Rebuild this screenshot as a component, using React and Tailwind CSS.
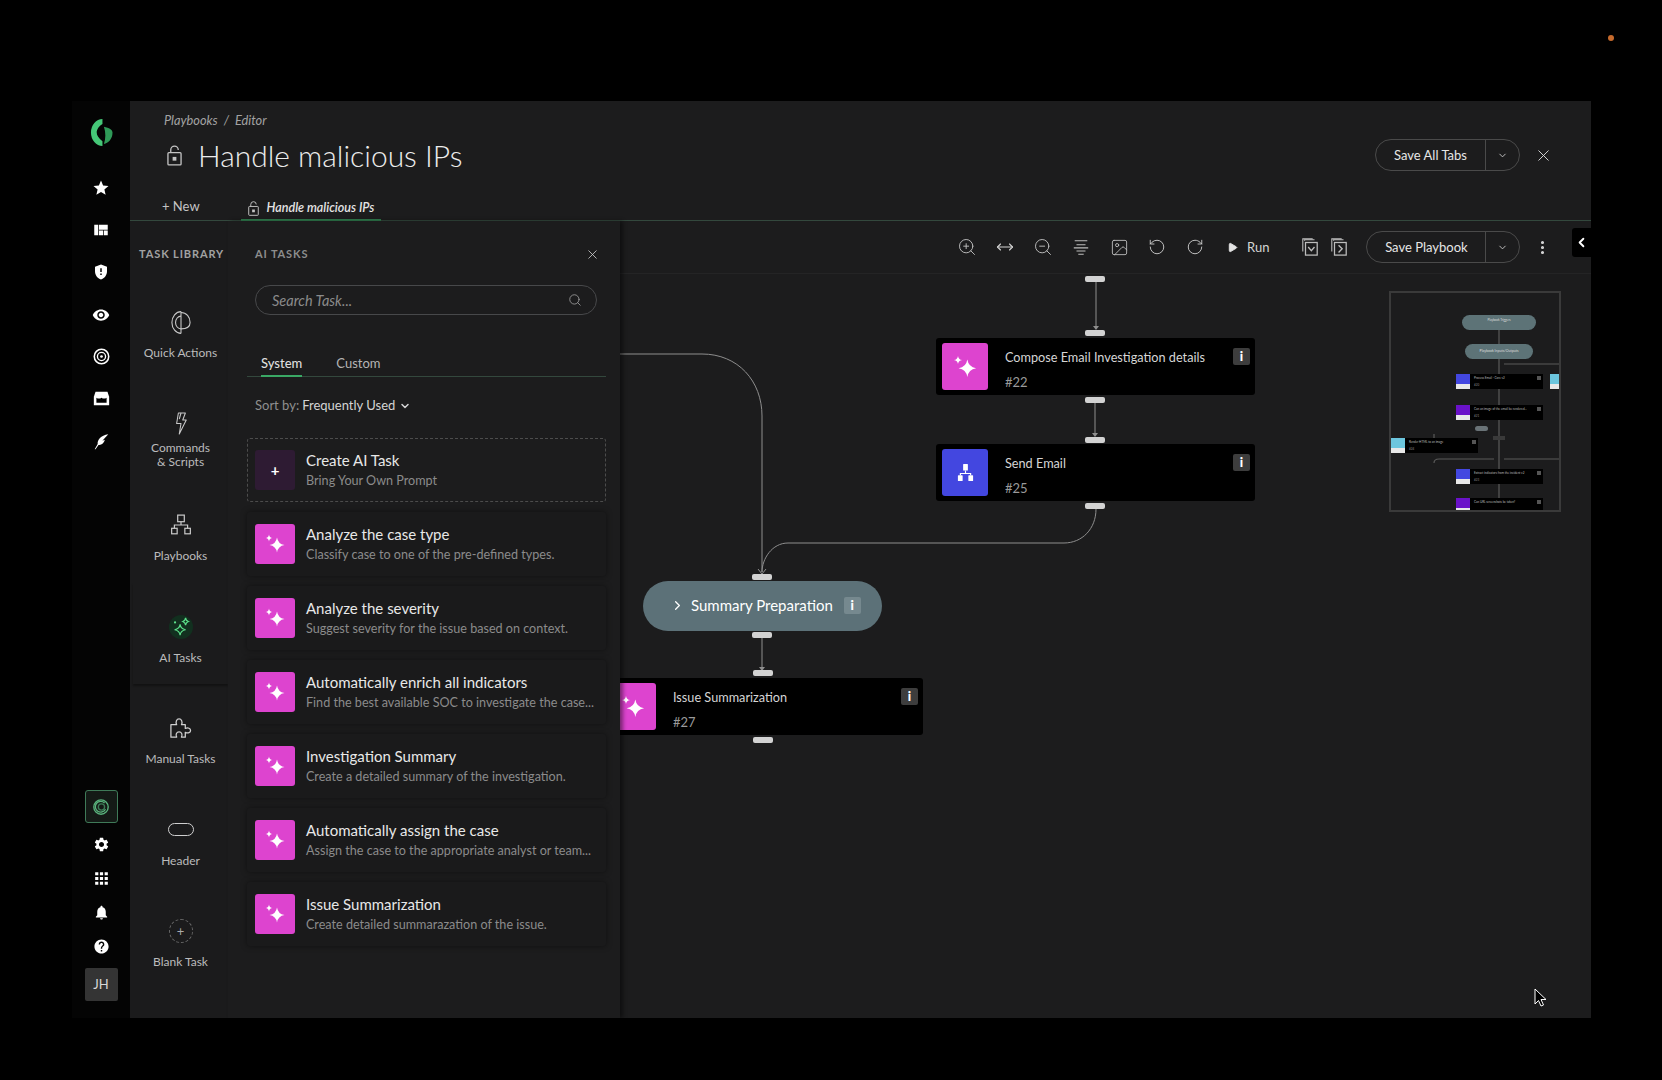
import { ChevronDown, ChevronLeft, ChevronRight, Image, MoveHorizontal, MoreVertical, Play, RotateCcw, RotateCw, Search, X, ZoomIn, ZoomOut } from 'lucide-react'
import { MdApps, MdGppMaybe, MdHelp, MdNotifications, MdSettings, MdStar, MdViewQuilt, MdVisibility } from 'react-icons/md'

const TASKS = [
  { title: 'Analyze the case type', desc: 'Classify case to one of the pre-defined types.' },
  { title: 'Analyze the severity', desc: 'Suggest severity for the issue based on context.' },
  { title: 'Automatically enrich all indicators', desc: 'Find the best available SOC to investigate the case...' },
  { title: 'Investigation Summary', desc: 'Create a detailed summary of the investigation.' },
  { title: 'Automatically assign the case', desc: 'Assign the case to the appropriate analyst or team...' },
  { title: 'Issue Summarization', desc: 'Create detailed summarazation of the issue.' },
]

function Sparkle({ className }) {
  return (
    <svg viewBox="0 0 24 24" className={className} fill="#fff">
      <path d="M14 5.500 Q15 12 21.500 13 Q15 14 14 20.500 Q13 14 6.500 13 Q13 12 14 5.500Z" />
      <path d="M6 2.500 Q6.400 5.600 9.500 6 Q6.400 6.400 6 9.500 Q5.600 6.400 2.500 6 Q5.600 5.600 6 2.500Z" />
    </svg>
  )
}

function LockIcon({ className }) {
  return (
    <svg viewBox="0 0 16 22" className={className} fill="none" stroke="currentColor" strokeWidth="1.4">
      <rect x="1" y="8" width="14" height="13" rx="1" />
      <path d="M4 8V5a4 4 0 0 1 8 0" />
      <rect x="6" y="12.500" width="4" height="4" fill="currentColor" stroke="none" />
    </svg>
  )
}

function Logo() {
  return (
    <svg viewBox="0 0 24 28" className="w-[23px] h-[27px]">
      <path d="M13 0 A12 14 0 0 0 13 28 L13 23 C9 20 7 17 7 14 C7 10 10 7 13 5Z" fill="#45c777" />
      <path d="M14.500 8 C20 9 23.500 11 23.500 14 C23.500 21 19 25 14.500 26 C16.500 20 16.500 14 14.500 8Z" fill="#2f9a58" />
    </svg>
  )
}

function TargetIcon() {
  return (
    <svg viewBox="0 0 20 20" className="w-[17px] h-[17px]" fill="none" stroke="#fff">
      <circle cx="10" cy="10" r="8.500" strokeWidth="1.800" />
      <circle cx="10" cy="10" r="4.800" strokeWidth="1.600" />
      <circle cx="10" cy="10" r="1.600" fill="#fff" stroke="none" />
    </svg>
  )
}

function StoreIcon() {
  return (
    <svg viewBox="0 0 20 20" className="w-[17px] h-[17px]" fill="#fff">
      <path d="M3 2h14l2 6v10H1V8z" />
      <path d="M4 9c2 1.500 4 1.500 6 0 2 1.500 4 1.500 6 0v6H4z" fill="#000" />
    </svg>
  )
}

function FeatherIcon() {
  return (
    <svg viewBox="0 0 20 20" className="w-[17px] h-[17px]" fill="#fff">
      <path d="M2 19 L5.500 13 C5 8 9 3 18 1.500 L11 9 L14 8 C13 12 10 14.500 6.500 14 L3 19Z" />
    </svg>
  )
}

function RingLogo() {
  return (
    <svg viewBox="0 0 20 20" className="w-[18px] h-[18px]" fill="none" stroke="#59b27c" strokeWidth="1.500">
      <circle cx="10" cy="10" r="8" />
      <path d="M14 5.500a6 6 0 1 0 1 7" />
      <circle cx="10.500" cy="10" r="3.500" stroke="#3c7a56" />
    </svg>
  )
}

function QuickIcon() {
  return (
    <svg viewBox="0 0 22 26" className="w-[20px] h-[25px]" fill="none" stroke="#c9c9c9" strokeWidth="1.200">
      <path d="M11 1 A10 12 0 0 0 11 25" />
      <path d="M11 1 V25" />
      <path d="M11 6 A6 7 0 0 0 11 20" />
      <path d="M11 2 C17 2 21 7 21 13 C21 17 18 20 11 20" />
    </svg>
  )
}

function BoltIcon() {
  return (
    <svg viewBox="0 0 16 26" className="w-[14px] h-[23px]" fill="none" stroke="#c9c9c9" strokeWidth="1.200" strokeLinejoin="round">
      <path d="M5 1H13L10 9H14L6 25L8 13H3Z" />
      <path d="M8 1L6 8" />
    </svg>
  )
}

function PuzzleIcon() {
  return (
    <svg viewBox="0 0 24 24" className="w-[23px] h-[23px]" fill="none" stroke="#d0d0d0" strokeWidth="1.300" strokeLinejoin="round">
      <path d="M2 8H8C6.500 5 8 2 10.500 2S14.500 5 13 8H17V12C20 10.500 22.500 12 22.500 14S20 17.500 17 16V21H13C14.500 18 13 15.500 10.500 15.500S6.500 18 8 21H2Z" />
    </svg>
  )
}

function NetworkIcon({ className, solid }) {
  if (solid) {
    return (
      <svg viewBox="0 0 20 20" className={className} fill="#fff">
        <rect x="7.500" y="1" width="5" height="7" rx=".6" />
        <rect x="2" y="13" width="5" height="6" rx=".6" />
        <rect x="13" y="13" width="5" height="6" rx=".6" />
        <path d="M9.400 8h1.200v2.500H16V13h-1.200v-1.300H5.200V13H4v-2.500h5.400z" />
      </svg>
    )
  }
  return (
    <svg viewBox="0 0 20 20" className={className} fill="none" stroke="#c9c9c9" strokeWidth="1.100">
      <rect x="7" y="1" width="6" height="6" />
      <rect x="1.500" y="13" width="5" height="5" />
      <rect x="13.500" y="13" width="5" height="5" />
      <path d="M10 7v3M4 13v-3h12v3" />
    </svg>
  )
}

function AlignIcon() {
  return (
    <svg viewBox="0 0 20 20" className="w-[18px] h-[18px]" fill="none" stroke="#bdbdbd" strokeWidth="1.200">
      <path d="M3 3h14M5 7.500h10M2 11h16M5 14.500h10M7 18h6" />
    </svg>
  )
}

function StackIcon({ kind }) {
  return (
    <svg viewBox="0 0 20 22" className="w-[18px] h-[20px]" fill="none" stroke="#bdbdbd" strokeWidth="1.200">
      <path d="M2 16V2h11" />
      <path d="M4 4V3h11" />
      <rect x="5" y="6" width="13" height="14" strokeWidth="1.400" />
      <path d={kind === 'down' ? 'M8 11l3.500 4 3.500-4' : 'M9.500 9l4 4-4 4'} strokeWidth="1.500" />
    </svg>
  )
}

function InfoBox({ className = 'bg-[#3d3d3d]' }) {
  return (
    <div className={`w-[17px] h-[17px] rounded-[2px] flex items-center justify-center text-white text-[13px] font-black leading-none ${className}`}>
      i
    </div>
  )
}

function SplitButton({ label, left }) {
  return (
    <div className={`flex items-center h-8 border border-[#4a4a4a] rounded-full text-[13px] text-[#e6e6e6] ${left}`}>
      <div className="flex-1 text-center pt-[1px]">{label}</div>
      <div className="w-[34px] h-full border-l border-[#4a4a4a] flex items-center justify-center">
        <ChevronDown size={11} color="#c8c8c8" />
      </div>
    </div>
  )
}

function LibraryItem({ label, icon, active, tight }) {
  return (
    <div className={`h-[101.500px] flex flex-col items-center text-[#bcbcbc] text-[12px] leading-[14px] text-center ${active ? 'shadow-[0_2px_2px_rgba(0,0,0,0.35)]' : ''}`}>
      <div className="h-[36px] mt-[26px] flex items-center justify-center">{icon}</div>
      <div className={tight ? 'mt-[-1px]' : 'mt-[6px]'}>{label}</div>
    </div>
  )
}

function SideIcon({ children }) {
  return <div className="w-full flex justify-center items-center h-[20px]">{children}</div>
}

function TaskCard({ title, desc }) {
  return (
    <div className="h-16 bg-[#1a1a1b] rounded-[3px] shadow-[0_0_6px_rgba(0,0,0,0.45)] flex items-center px-2 gap-[11px]">
      <div className="w-10 h-10 rounded-[3px] bg-[#dd44cf] flex items-center justify-center shrink-0">
        <Sparkle className="w-[24px] h-[24px]" />
      </div>
      <div className="min-w-0">
        <div className="text-[15px] leading-[18px] text-[#e8e8e8]">{title}</div>
        <div className="mt-[3px] text-[12.600px] leading-[18px] text-[#8b8b8b] whitespace-nowrap">{desc}</div>
      </div>
    </div>
  )
}

function Handle({ className }) {
  return <div className={`absolute w-5 h-[6px] rounded-[2px] bg-[#d2d2d2] ${className}`} />
}

function Node({ className, color, title, id, icon }) {
  return (
    <div className={`absolute w-[319px] h-[57px] bg-black rounded-[3px] ${className}`}>
      <div className={`absolute left-[6px] top-[5px] w-[46px] h-[47px] rounded-[3px] flex items-center justify-center ${color}`}>
        {icon}
      </div>
      <div className="absolute left-[69px] top-[9px] text-[12.700px] leading-[20px] text-[#d6d6d6] whitespace-nowrap">{title}</div>
      <div className="absolute left-[69px] top-[34px] text-[13px] leading-[20px] text-[#9a9a9a]">{id}</div>
      <div className="absolute right-[5px] top-[10px]">
        <InfoBox />
      </div>
    </div>
  )
}

function MiniNode({ className, color, title, id }) {
  return (
    <div className={`absolute w-[87px] h-[15px] bg-black ${className}`}>
      <div className={`absolute left-0 top-0 w-[14px] h-[15px] ${color}`}>
        <div className="absolute left-0 right-0 bottom-0 h-[5px] bg-[#e8e8e8]" />
      </div>
      <div className="absolute left-[18px] top-[2px] text-[3px] leading-[5px] text-[#bbb] whitespace-nowrap">{title}</div>
      <div className="absolute left-[18px] top-[9px] text-[3px] leading-[5px] text-[#888]">{id}</div>
      <div className="absolute right-[2px] top-[2px] w-[4px] h-[4px] bg-[#555]" />
    </div>
  )
}

function Minimap() {
  return (
    <div className="absolute left-[769px] top-[70px] w-[172px] h-[221px] border-2 border-[#3a3a3a] overflow-hidden">
      <div className="absolute -left-[2px] -top-[2px] w-[172px] h-[221px]">
        <svg className="absolute inset-0 w-full h-full" fill="none" stroke="#5a5a5a">
          <path d="M110 38V212M115 73H172M45 172Q45 168 50 168H105M115 168H172M45 148V143" strokeWidth="1.200" />
        </svg>
        <div className="absolute left-[73px] top-[24px] w-[74px] h-[15px] rounded-full bg-[#5d7377] text-[3px] leading-[4px] text-[#ddd] text-center pt-[3px]">
          Playbook Triggers
        </div>
        <div className="absolute left-[76px] top-[53px] w-[68px] h-[15px] rounded-full bg-[#5d7377] text-[3.500px] leading-[15px] text-[#ddd] text-center">
          Playbook Inputs/Outputs
        </div>
        <MiniNode className="left-[67px] top-[83px]" color="bg-[#4347e0]" title="Process Email - Core v2" id="#20" />
        <MiniNode className="left-[161px] top-[83px]" color="bg-[#6cc6de]" title="" id="" />
        <MiniNode className="left-[67px] top-[114px]" color="bg-[#6a12c9]" title="Can an image of the email be rendered..." id="#21" />
        <div className="absolute left-[86px] top-[135px] w-[13px] h-[5px] rounded-full bg-[#6a7377]" />
        <div className="absolute left-[104px] top-[145px] w-[12px] h-[4px] bg-[#3a3a3a]" />
        <MiniNode className="left-[2px] top-[147px]" color="bg-[#6cc6de]" title="Render HTML to an image" id="#24" />
        <MiniNode className="left-[67px] top-[178px]" color="bg-[#4347e0]" title="Extract indicators from the incident v2" id="#23" />
        <MiniNode className="left-[67px] top-[207px]" color="bg-[#6a12c9]" title="Can URL screenshots be taken?" id="" />
      </div>
    </div>
  )
}

export default function App() {
  return (
    <div className="h-[1080px] w-full bg-black relative overflow-hidden font-['Lato','Noto_Sans',sans-serif]">
      <div className="absolute left-[1608px] top-[35px] w-[6px] h-[6px] rounded-full bg-[#c66a2c]" />
      <div className="pt-[101px] pl-[72px] flex">
        {/* Left nav */}
        <div className="w-[58px] h-[917px] bg-[#040404] flex flex-col items-center pt-[18px] shrink-0">
          <Logo />
          <div className="w-full flex flex-col gap-[22.200px] mt-[32px] text-white">
            <SideIcon><MdStar size={18} /></SideIcon>
            <SideIcon><MdViewQuilt size={18} /></SideIcon>
            <SideIcon><MdGppMaybe size={18} /></SideIcon>
            <SideIcon><MdVisibility size={18} /></SideIcon>
            <SideIcon><TargetIcon /></SideIcon>
            <SideIcon><StoreIcon /></SideIcon>
            <SideIcon><FeatherIcon /></SideIcon>
          </div>
          <div className="mt-auto mb-[17px] w-full flex flex-col items-center text-white">
            <div className="w-[33px] h-[33px] border border-[#3f7a58] rounded-[3px] bg-[#141a16] flex items-center justify-center mb-[11px]">
              <RingLogo />
            </div>
            <div className="w-full flex flex-col gap-[14px]">
              <SideIcon><MdSettings size={17} /></SideIcon>
              <SideIcon><MdApps size={19} /></SideIcon>
              <SideIcon><MdNotifications size={17} /></SideIcon>
              <SideIcon><MdHelp size={17} /></SideIcon>
            </div>
            <div className="w-[33px] h-[33px] bg-[#343434] rounded-[2px] mt-[12px] flex items-center justify-center text-[13px] text-[#d8d8d8]">
              JH
            </div>
          </div>
        </div>

        {/* Main */}
        <div className="w-[1461px] h-[917px] bg-[#1c1c1d] flex flex-col">
          {/* Header */}
          <div className="h-[78px] pl-[34px] pr-[38px] flex justify-between shrink-0">
            <div>
              <div className="mt-[11px] text-[12.750px] leading-4 italic text-[#a3a3a3]">Playbooks&nbsp;&nbsp;/&nbsp;&nbsp;Editor</div>
              <div className="mt-[8px] flex items-center">
                <LockIcon className="w-[15px] h-[21px] text-[#c4c4c4] ml-[3px]" />
                <div className="ml-[16px] text-[30px] leading-[38px] font-light text-[#ececec]">Handle malicious IPs</div>
              </div>
            </div>
            <div className="flex items-center gap-[14px] mt-[38px] h-8">
              <SplitButton label="Save All Tabs" left="w-[145px]" />
              <X size={19} strokeWidth={1.200} color="#d8d8d8" />
            </div>
          </div>

          {/* Open tabs */}
          <div className="h-[42px] relative flex items-center pl-[32px] shrink-0 border-b border-[#33483d]">
            <div className="text-[13px] text-[#c4c4c4] pt-[15px]">+ New</div>
            <div className="ml-[41px] h-full flex items-center border-b-2 border-[#2f7a4d] -mb-px pt-[19px] px-[7px]">
              <LockIcon className="w-[11px] h-[15px] text-[#c4c4c4]" />
              <div className="ml-[8px] text-[12.500px] font-semibold italic text-[#e4e4e4]">Handle malicious IPs</div>
            </div>
          </div>

          {/* Body */}
          <div className="flex-1 flex min-h-0">
            {/* Task library */}
            <div className="w-[98px] shrink-0 bg-[#1b1b1c]">
              <div className="pt-[26px] pl-[9px] text-[11px] leading-[14px] font-bold tracking-[0.08em] text-[#a2a2a2] whitespace-nowrap">TASK LIBRARY</div>
              <div className="mt-[17px] pl-[3px]">
                <LibraryItem label="Quick Actions" icon={<QuickIcon />} />
                <LibraryItem tight label={<>Commands<br />&amp; Scripts</>} icon={<BoltIcon />} />
                <LibraryItem label="Playbooks" icon={<NetworkIcon className="w-[22px] h-[22px]" />} />
                <LibraryItem
                  active
                  label="AI Tasks"
                  icon={
                    <div className="w-6 h-6 rounded-full bg-[#12301f] flex items-center justify-center">
                      <svg viewBox="0 0 24 24" className="w-[22px] h-[22px]" fill="none" stroke="#5ce08a" strokeWidth="1.300">
                        <path d="M11 9 Q11.500 14 17 15 Q11.500 16 11 21 Q10.500 16 5 15 Q10.500 14 11 9Z" />
                        <path d="M17 2 Q17.300 5 20 6 Q17.300 7 17 10 Q16.700 7 14 6 Q16.700 5 17 2Z" />
                        <circle cx="5.500" cy="7" r="1.200" fill="#5ce08a" stroke="none" />
                      </svg>
                    </div>
                  }
                />
                <LibraryItem label="Manual Tasks" icon={<PuzzleIcon />} />
                <LibraryItem label="Header" icon={<div className="w-[26px] h-[13px] rounded-full border-[1.500px] border-[#cfcfcf]" />} />
                <LibraryItem
                  label="Blank Task"
                  icon={
                    <div className="w-6 h-6 rounded-full border border-dashed border-[#666] flex items-center justify-center text-[#aaa] text-[13px] leading-none">+</div>
                  }
                />
              </div>
            </div>

            {/* AI tasks panel */}
            <div className="w-[392px] shrink-0 bg-[#1c1c1d] pl-[19px] pr-[14px] relative z-10 shadow-[3px_0_4px_rgba(0,0,0,0.45)]">
              <div className="ml-[8px] mt-[26px] flex items-center justify-between h-[14px]">
                <div className="text-[11px] font-bold tracking-[0.08em] text-[#8d8d8d]">AI TASKS</div>
                <X size={15} strokeWidth={1.300} color="#d0d0d0" className="mr-[6px]" />
              </div>
              <div className="ml-[8px] mr-[9px] mt-[24px] h-[30px] rounded-full border border-[#47484a] flex items-center pl-[16px] pr-[14px] justify-between">
                <div className="text-[14.500px] italic text-[#8b8b8b] pt-[1px]">Search Task...</div>
                <Search size={14} strokeWidth={1.400} color="#a0a0a0" />
              </div>
              <div className="mt-[33px] h-[29px] flex items-end pl-[14px] gap-[34px] border-b border-[#33483d]">
                <div className="h-full flex items-center pb-[1px] pt-[4px] text-[13px] font-medium text-[#dedede] border-b-2 border-[#3aa865] -mb-px">System</div>
                <div className="h-full flex items-center pb-[1px] pt-[4px] text-[13px] text-[#b4b4b4]">Custom</div>
              </div>
              <div className="ml-[8px] mt-[20px] h-[18px] flex items-center text-[13px]">
                <span className="text-[#8f8f8f]">Sort by:</span>
                <span className="ml-[3px] text-[#d4d4d4]">Frequently Used</span>
                <ChevronDown size={12} strokeWidth={3} color="#d4d4d4" className="ml-[4px]" />
              </div>
              <div className="mt-[23px] flex flex-col gap-[10px]">
                <div className="h-16 rounded-[3px] border border-dashed border-[#4c4c4c] flex items-center px-[7px] gap-[11px]">
                  <div className="w-10 h-10 rounded-[3px] bg-[#2e1b33] flex items-center justify-center text-white font-bold text-[15px] leading-none shrink-0">+</div>
                  <div>
                    <div className="text-[15px] leading-[18px] text-[#e8e8e8]">Create AI Task</div>
                    <div className="mt-[3px] text-[12.600px] leading-[18px] text-[#8b8b8b]">Bring Your Own Prompt</div>
                  </div>
                </div>
                {TASKS.map(t => <TaskCard key={t.title} title={t.title} desc={t.desc} />)}
              </div>
            </div>

            {/* Canvas */}
            <div className="flex-1 relative overflow-hidden">
              <div className="h-[53px] border-b border-[#242425] flex items-center pl-[328px]">
                <div className="w-[38px] flex justify-center"><ZoomIn size={20} strokeWidth={1.100} color="#c4c4c4" /></div>
                <div className="w-[38px] flex justify-center"><MoveHorizontal size={18} strokeWidth={1.500} color="#d4d4d4" /></div>
                <div className="w-[38px] flex justify-center"><ZoomOut size={20} strokeWidth={1.100} color="#c4c4c4" /></div>
                <div className="w-[38px] flex justify-center"><AlignIcon /></div>
                <div className="w-[38px] flex justify-center"><Image size={19} strokeWidth={1.100} color="#c4c4c4" /></div>
                <div className="w-[38px] flex justify-center"><RotateCcw size={18} strokeWidth={1.200} color="#d0d0d0" /></div>
                <div className="w-[38px] flex justify-center"><RotateCw size={18} strokeWidth={1.200} color="#d0d0d0" /></div>
                <div className="ml-[13px] flex items-center text-[13px] text-[#d4d4d4] pt-[1px]">
                  <Play size={11} fill="#e4e4e4" color="#e4e4e4" />
                  <span className="ml-[9px]">Run</span>
                </div>
                <div className="ml-[32px] flex gap-[11px]">
                  <StackIcon kind="down" />
                  <StackIcon kind="right" />
                </div>
                <SplitButton label="Save Playbook" left="w-[154px] ml-[18px]" />
                <MoreVertical size={17} strokeWidth={2.400} color="#d8d8d8" className="ml-[14px]" />
              </div>
              <div className="absolute right-0 top-[7px] w-[19px] h-[29px] bg-black rounded-l-[3px] flex items-center justify-center">
                <ChevronLeft size={15} strokeWidth={3} color="#fff" />
              </div>

              <svg className="absolute inset-0 w-full h-full" fill="none" stroke="#8e8e8e" strokeWidth="1">
                <path d="M476 61V107" />
                <path d="M475 182V214" />
                <path d="M476 288C476 308 462 322 444 322L168 322C152 322 142 338 142 351" />
                <path d="M0 133L82 133C118 133 142 160 142 195L142 351" />
                <path d="M142 417V447" />
                <path d="M473 105l3 4 3-4zM472 212l3 4 3-4zM139 446l3 4 3-4z" fill="#8e8e8e" stroke="none" />
                <path d="M138 348l4 5 4-5" />
              </svg>

              <Handle className="left-[465px] top-[55px]" />
              <Handle className="left-[465px] top-[109px]" />
              <Node
                className="left-[316px] top-[117px]"
                color="bg-[#dd44cf]"
                title="Compose Email Investigation details"
                id="#22"
                icon={<Sparkle className="w-[28px] h-[28px]" />}
              />
              <Handle className="left-[465px] top-[176px]" />
              <Handle className="left-[465px] top-[216px]" />
              <Node
                className="left-[316px] top-[223px]"
                color="bg-[#4347e0]"
                title="Send Email"
                id="#25"
                icon={<NetworkIcon solid className="w-[19px] h-[19px]" />}
              />
              <Handle className="left-[465px] top-[282px]" />

              <Handle className="left-[132px] top-[353px]" />
              <div className="absolute left-[23px] top-[360px] w-[239px] h-[50px] rounded-full bg-[#5c7178] flex items-center pl-[27px] pb-[1px] text-[15px] text-white">
                <ChevronRight size={15} strokeWidth={2} />
                <span className="ml-[6px]">Summary Preparation</span>
                <InfoBox className="bg-[#76898f] ml-[11px]" />
              </div>
              <Handle className="left-[132px] top-[411px]" />
              <Handle className="left-[133px] top-[449px]" />
              <Node
                className="-left-[16px] top-[457px]"
                color="bg-[#dd44cf]"
                title="Issue Summarization"
                id="#27"
                icon={<Sparkle className="w-[28px] h-[28px]" />}
              />
              <Handle className="left-[133px] top-[516px]" />

              <Minimap />

              <svg viewBox="0 0 14 20" className="absolute left-[914px] top-[767px] w-[14px] h-[20px]">
                <path d="M1 1V16L4.500 12.500L7 18L9.500 17L7 11.500H12Z" fill="#000" stroke="#fff" strokeWidth="1" />
              </svg>
            </div>
          </div>
        </div>
      </div>
    </div>
  )
}
